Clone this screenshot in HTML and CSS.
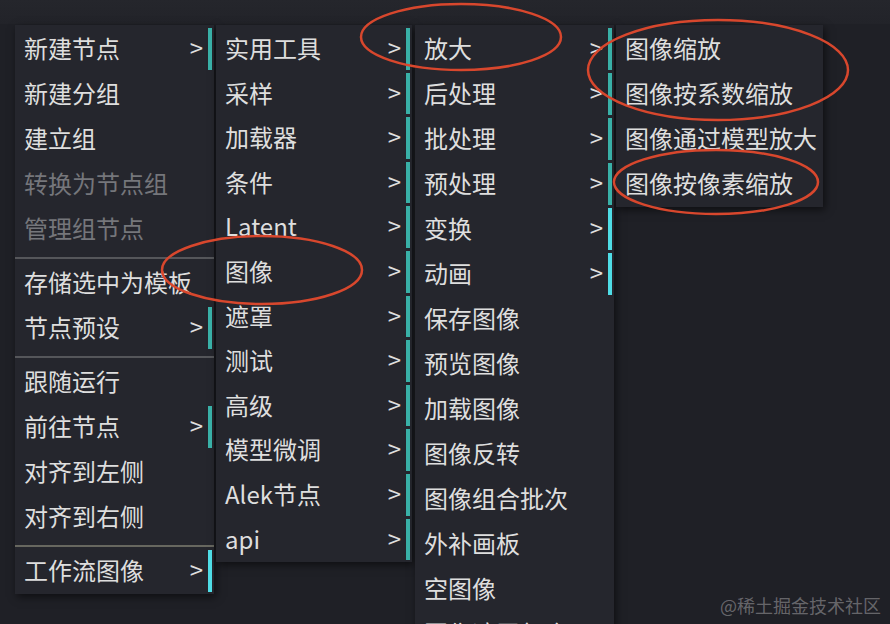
FILE: index.html
```html
<!DOCTYPE html>
<html lang="zh-CN">
<head>
<meta charset="utf-8">
<title>Context menu</title>
<link rel="stylesheet" href="styles.css">
</head>
<body>
<div class="canvas">
  <div class="topband"></div>
  <div class="menus">
    <div class="menu m1">
      <div class="item sub">新建节点</div>
      <div class="item">新建分组</div>
      <div class="item">建立组</div>
      <div class="item off">转换为节点组</div>
      <div class="item off">管理组节点</div>
      <div class="sep"></div>
      <div class="item">存储选中为模板</div>
      <div class="item sub">节点预设</div>
      <div class="sep"></div>
      <div class="item">跟随运行</div>
      <div class="item sub">前往节点</div>
      <div class="item">对齐到左侧</div>
      <div class="item">对齐到右侧</div>
      <div class="sep sep-olive"></div>
      <div class="item sub hi">工作流图像</div>
    </div>
    <div class="menu m2">
      <div class="item sub">实用工具</div>
      <div class="item sub">采样</div>
      <div class="item sub">加载器</div>
      <div class="item sub">条件</div>
      <div class="item sub">Latent</div>
      <div class="item sub">图像</div>
      <div class="item sub">遮罩</div>
      <div class="item sub">测试</div>
      <div class="item sub">高级</div>
      <div class="item sub">模型微调</div>
      <div class="item sub">Alek节点</div>
      <div class="item sub">api</div>
    </div>
    <div class="menu m3">
      <div class="item sub">放大</div>
      <div class="item sub">后处理</div>
      <div class="item sub">批处理</div>
      <div class="item sub">预处理</div>
      <div class="item sub hi">变换</div>
      <div class="item sub hi">动画</div>
      <div class="item">保存图像</div>
      <div class="item">预览图像</div>
      <div class="item">加载图像</div>
      <div class="item">图像反转</div>
      <div class="item">图像组合批次</div>
      <div class="item">外补画板</div>
      <div class="item">空图像</div>
      <div class="item">图像遮罩复合</div>
    </div>
    <div class="menu m4">
      <div class="item">图像缩放</div>
      <div class="item">图像按系数缩放</div>
      <div class="item">图像通过模型放大</div>
      <div class="item">图像按像素缩放</div>
    </div>
  </div>
  <svg class="marks" width="890" height="624" viewBox="0 0 890 624">
    <ellipse cx="461" cy="37" rx="100" ry="33"/>
    <ellipse cx="718" cy="70" rx="130" ry="50"/>
    <ellipse cx="716" cy="182" rx="102" ry="32"/>
    <ellipse cx="262" cy="270" rx="100" ry="34"/>
  </svg>
  <div class="watermark">@稀土掘金技术社区</div>
</div>
</body>
</html>
```
FILE: styles.css
```css
* { box-sizing: border-box; }

html, body {
  margin: 0;
  padding: 0;
}

body {
  width: 890px;
  height: 624px;
  overflow: hidden;
  background: #1f2026;
  font-family: "Noto Sans CJK SC", "Noto Sans", sans-serif;
}

.canvas {
  position: relative;
  width: 890px;
  height: 624px;
  overflow: hidden;
}

.topband {
  position: absolute;
  left: 0;
  top: 0;
  width: 890px;
  height: 24px;
  background: linear-gradient(#25262c, #222329);
}

.menus {
  position: relative;
  display: flex;
  align-items: flex-start;
  padding: 25px 0 0 15px;
}

.menu {
  background: #25262d;
  padding-bottom: 2px;
  box-shadow: 2px 3px 8px rgba(0, 0, 0, 0.55);
  flex: none;
}

.m1 { width: 199px; margin-right: 2px; }
.m2 { width: 196px; margin-right: 3px; }
.m3 { width: 199px; margin-right: 2px; }
.m4 { width: 207px; }

.item {
  position: relative;
  height: 42px;
  margin-top: 3px;
  padding-left: 9px;
  line-height: 40px;
  font-size: 24px;
  color: #dedede;
  white-space: nowrap;
}

.m2 .item {
  height: 41.6px;
  line-height: 39.6px;
}

.item.off {
  color: #75767b;
}

.item.sub {
  margin-right: 2px;
  border-right: 4px solid #39b0a7;
}

.item.sub.hi {
  border-right-color: #4fdde6;
}

.item.sub::after {
  content: ">";
  position: absolute;
  right: 5px;
  top: -1px;
  color: #dedede;
}

.sep {
  height: 2px;
  margin: 7px 0 2px;
  background: #55565a;
}

.sep.sep-olive {
  background: #67675f;
}

.marks {
  position: absolute;
  left: 0;
  top: 0;
  pointer-events: none;
}

.marks ellipse {
  fill: none;
  stroke: #d8472d;
  stroke-width: 2.5;
}

.watermark {
  position: absolute;
  right: 9px;
  bottom: 6px;
  font-size: 18px;
  color: rgba(255, 255, 255, 0.33);
  white-space: nowrap;
}
```
